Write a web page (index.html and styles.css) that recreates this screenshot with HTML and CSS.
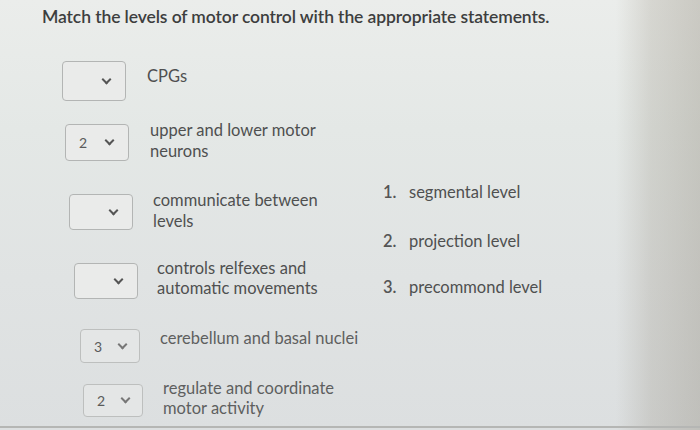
FILE: index.html
```html
<!DOCTYPE html>
<html lang="en">
<head>
    <meta charset="UTF-8">
    <title>Matching question</title>
    <link rel="stylesheet" href="styles.css">
</head>
<body>
    <div class="question">
        <h1 class="prompt">Match the levels of motor control with the appropriate statements.</h1>

        <div class="match">
            <div class="pairs">
                <div class="pair">
                    <div class="picker"><span class="value"></span><span class="chev"></span></div>
                    <div class="statement">CPGs</div>
                </div>
                <div class="pair">
                    <div class="picker"><span class="value">2</span><span class="chev"></span></div>
                    <div class="statement">upper and lower motor<br>neurons</div>
                </div>
                <div class="pair">
                    <div class="picker"><span class="value"></span><span class="chev"></span></div>
                    <div class="statement">communicate between<br>levels</div>
                </div>
                <div class="pair">
                    <div class="picker"><span class="value"></span><span class="chev"></span></div>
                    <div class="statement">controls relfexes and<br>automatic movements</div>
                </div>
                <div class="pair">
                    <div class="picker small"><span class="value">3</span><span class="chev"></span></div>
                    <div class="statement">cerebellum and basal nuclei</div>
                </div>
                <div class="pair">
                    <div class="picker small"><span class="value">2</span><span class="chev"></span></div>
                    <div class="statement">regulate and coordinate<br>motor activity</div>
                </div>
            </div>

            <ol class="options">
                <li><span class="num">1.</span>segmental level</li>
                <li><span class="num">2.</span>projection level</li>
                <li><span class="num">3.</span>precommond level</li>
            </ol>
        </div>
    </div>
</body>
</html>
```

FILE: styles.css
```css
/* page */
body {
    margin: 0;
    width: 700px;
    height: 430px;
    overflow: hidden;
    font-family: Lato, "Open Sans", sans-serif;
    color: #4a4b4b;
    background:
        linear-gradient(90deg, rgba(0,0,0,0) 0%, rgba(0,0,0,0) 88%, rgba(120,110,90,0.18) 93%, rgba(110,100,80,0.26) 100%),
        linear-gradient(180deg, #ebedeb 0%, #e4e8e6 30%, #e0e3e3 65%, #dcdfe0 100%);
}

.question {
    height: 428px;
    border-bottom: 2px solid #b5b6b4;
    box-sizing: border-box;
    padding: 6px 0 0 42px;
}

.prompt {
    margin: 0;
    font-size: 17.5px;
    font-weight: 600;
    color: #3d3e3e;
    letter-spacing: -0.1px;
}

.match {
    display: flex;
    padding-top: 34px;
}

/* left column of statement rows */
.pairs {
    display: flex;
    flex-direction: column;
    width: 341px;
}
.pair {
    display: flex;
    align-items: flex-start;
    gap: 20px;
}
.pair:nth-child(1) { margin-left: 20px; height: 63px; gap: 21px; }
.pair:nth-child(2) { margin-left: 23px; height: 70px; gap: 21px; }
.pair:nth-child(3) { margin-left: 27px; height: 69px; }
.pair:nth-child(4) { margin-left: 32px; height: 66px; gap: 19px; }
.pair:nth-child(5) { margin-left: 38px; height: 55px; }
.pair:nth-child(6) { margin-left: 41px; }

.picker {
    width: 64px;
    height: 37px;
    box-sizing: border-box;
    border: 1.5px solid #b3b5b4;
    border-radius: 4px;
    background: #eaebea;
    display: flex;
    align-items: center;
    padding-left: 13px;
    gap: 17px;
    flex-shrink: 0;
}
.pair:nth-child(1) .picker { height: 40px; }
.pair:nth-child(3) .picker,
.pair:nth-child(4) .picker { height: 36px; }
.picker.small {
    width: 60px;
    height: 34px;
    border-color: #bdbfbe;
    background: #e4e6e6;
    gap: 15px;
}
.pair:nth-child(6) .picker { height: 33px; }
.value {
    width: 10px;
    font-size: 14px;
    color: #5a5b5b;
}
.chev {
    width: 5px;
    height: 5px;
    border-right: 2px solid #555;
    border-bottom: 2px solid #555;
    transform: rotate(45deg);
    margin-top: -4px;
}
.small .chev {
    border-color: #777;
}

.statement {
    font-size: 16.5px;
    line-height: 21px;
    color: #4f5050;
    margin-top: -4px;
}
.pair:nth-child(1) .statement { margin-top: 5px; }
.pair:nth-child(4) .statement { margin-top: -5px; line-height: 20px; }
.pair:nth-child(5) .statement,
.pair:nth-child(6) .statement {
    color: #5e5f5f;
    margin-top: -1px;
}
.pair:nth-child(6) .statement { margin-top: -6px; line-height: 20px; }

/* right column of numbered choices */
.options {
    list-style: none;
    margin: 0;
    padding: 121px 0 0 0;
    font-size: 16.5px;
    line-height: 20px;
    color: #4f5050;
}
.options li {
    height: 49px;
}
.options li:nth-child(2) { height: 46px; }
.num {
    display: inline-block;
    width: 26px;
    font-weight: 600;
    color: #555;
}
```
